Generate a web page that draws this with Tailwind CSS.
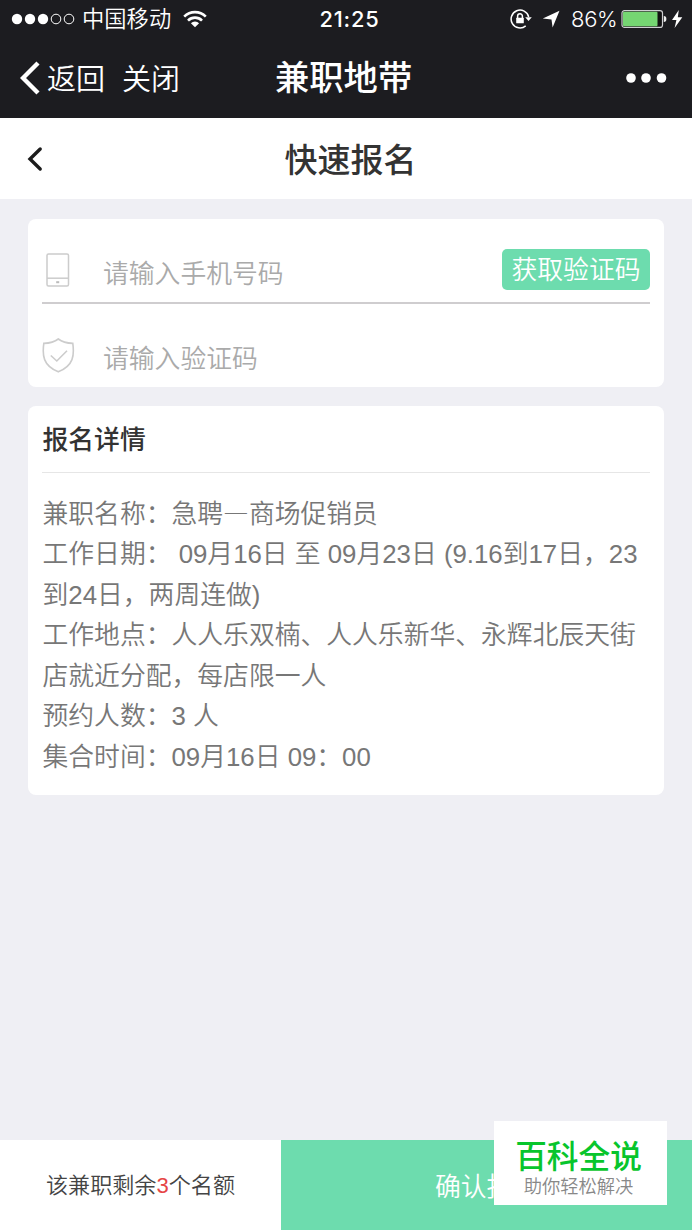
<!DOCTYPE html>
<html lang="zh-CN">
<head>
<meta charset="utf-8">
<title>快速报名</title>
<script src="https://cdn.jsdelivr.net/npm/@tailwindcss/browser@4"></script>
</head>
<body class="relative flex h-[1230px] w-[692px] flex-col overflow-hidden bg-[#efeff4] font-['Liberation_Sans','Noto_Sans_CJK_SC',sans-serif] whitespace-nowrap">
  <header class="h-[118px] bg-[#1c1c20] text-white">
    <!-- status bar -->
    <div class="relative flex h-[38px] items-center pl-[11px] pr-[9px]">
      <svg class="h-[14px] w-[64px]" viewBox="0 0 64 14" fill="#fff"><circle cx="6" cy="7" r="5.2"/><circle cx="19" cy="7" r="5.2"/><circle cx="32" cy="7" r="5.2"/><g fill="none" stroke="#fff" stroke-width="1"><circle cx="45" cy="7" r="4.8"/><circle cx="58" cy="7" r="4.8"/></g></svg>
      <span class="ml-[7px] pt-[2px] text-[22.3px] leading-[38px] font-[350]">中国移动</span>
      <svg class="ml-[12px] h-[18px] w-[24px]" viewBox="0 0 24 18" fill="none" stroke="#fff" stroke-width="2.6"><path d="M1.2 6.6A15.2 15.2 0 0 1 22.8 6.6"/><path d="M5 10.6A9.8 9.8 0 0 1 19 10.6"/><path d="M12 17.2L7.9 13.2A5.8 5.8 0 0 1 16.1 13.2Z" fill="#fff" stroke="none"/></svg>
      <span class="absolute inset-x-0 pl-[7px] text-center font-['Inter'] text-[21.8px] leading-[38px] font-medium tracking-[0.8px]">21:25</span>
      <div class="ml-auto flex items-center">
        <svg class="h-[20px] w-[22px]" viewBox="0 0 22 20" fill="none" stroke="#fff" stroke-width="1.5"><path d="M18.7 8A8.9 8.9 0 1 0 15.7 16.9"/><path d="M15.2 8.2h6.6L18.5 12z" fill="#fff" stroke="none"/><path d="M7.6 9V7.2a2.4 2.4 0 0 1 4.8 0V9"/><rect x="6.2" y="8.7" width="7.6" height="5.6" rx=".5" fill="#fff" stroke="none"/></svg>
        <svg class="ml-[10px] h-[18px] w-[18px]" viewBox="0 0 18 18" fill="#fff"><path d="M17.5 .8L10.6 17.6L9.5 9.6L.8 8.400Z"/></svg>
        <span class="ml-[11px] w-[47px] font-['Inter'] text-[22px] leading-[38px] font-[350] tracking-[-0.3px]">86%</span>
        <svg class="ml-[3px] h-[20px] w-[46px]" viewBox="0 0 46 20"><rect x="1" y="1.6" width="40.5" height="16.8" rx="2.5" fill="#111" stroke="#cfcfd2" stroke-width="1.2"/><rect x="2" y="2.7" width="34.5" height="14.6" rx="1" fill="#75d672"/><path d="M42.8 7q2.6 0 2.6 3t-2.6 3z" fill="#eee"/></svg>
        <svg class="ml-[4px] h-[18px] w-[12px]" viewBox="0 0 12 18" fill="#fff"><path d="M7.8 0L1 10h4.4L3.6 18L11.3 7.2H6.8z"/></svg>
      </div>
    </div>
    <!-- browser bar -->
    <nav class="relative flex h-[80px] items-center pl-[20px] pr-[24px] text-[29px] leading-[80px] font-[350]">
      <svg class="h-[34px] w-[20px]" viewBox="0 0 20 34" fill="none" stroke="#fff" stroke-width="4.4"><path d="M18 2L3 17L18 32"/></svg>
      <span class="ml-[7px] pt-[4px]">返回</span>
      <span class="ml-[17px] pt-[4px]">关闭</span>
      <h1 class="absolute left-[275px] text-[34.3px] leading-[84px] font-medium">兼职地带</h1>
      <svg class="ml-auto h-[10px] w-[42px]" viewBox="0 0 42 10" fill="#fff"><circle cx="5" cy="5" r="4.8"/><circle cx="20" cy="5" r="4.8"/><circle cx="35.5" cy="5" r="4.8"/></svg>
    </nav>
  </header>
  <div class="relative flex h-[81px] items-center bg-white pl-[27px] text-[#333]">
    <svg class="h-[26px] w-[16px]" viewBox="0 0 16 26" fill="none" stroke="#1c1c1c" stroke-width="3.4" stroke-linecap="round"><path d="M13.2 3L3 13L13.2 23"/></svg>
    <h2 class="absolute inset-x-0 pt-[5px] pl-[9px] text-center text-[33px] leading-[82px] font-medium">快速报名</h2>
  </div>

  <main class="flex flex-1 flex-col px-[28px] pt-[20px]">
    <section class="h-[168px] rounded-[8px] bg-white px-[14px] text-[25.8px] font-[350]">
      <div class="flex h-[85px] items-center border-b-2 border-[#cfcdcf]">
        <svg class="mt-[19px] ml-[4px] h-[34px] w-[24px]" viewBox="0 0 24 34" fill="none" stroke="#ccc" stroke-width="1.5"><rect x="1" y="1" width="21.5" height="32" rx="1.5"/><path d="M1 25.2h21.5"/><rect x="10.2" y="28.2" width="3" height="2" fill="#bbb" stroke="none"/></svg>
        <span class="mt-[28px] ml-[33px] text-[#aaa]">请输入手机号码</span>
        <button class="mt-[17px] ml-auto h-[41px] w-[148px] rounded-[5px] bg-[#6ddcae] pt-px text-center leading-[41px] text-white">获取验证码</button>
      </div>
      <div class="flex h-[83px] items-center">
        <svg class="mt-[20px] h-[35px] w-[33px]" viewBox="0 0 33 35" fill="none" stroke="#ccc" stroke-width="1.6"><path d="M16.3 1C12.5 4 7.5 5.2 1.8 5.4C.2 17 .8 27.5 16.3 33.8C31.8 27.5 32.4 17 30.8 5.4C25.1 5.2 20.1 4 16.3 1Z"/><path d="M8.8 17.5L14.8 23L25 12.8"/></svg>
        <span class="mt-[28px] ml-[28px] text-[#aaa]">请输入验证码</span>
      </div>
    </section>
    <section class="mt-[19px] h-[389px] rounded-[8px] bg-white px-[14px] text-[25.8px]">
      <h3 class="h-[67px] border-b border-[#e6e6e6] pt-px pl-[0.5px] leading-[66px] font-medium text-[#333]">报名详情</h3>
      <div class="pt-[18.5px] pl-[0.5px] leading-[40.6px] font-[350] text-[#777]">
        <p>兼职名称：急聘<span class="font-['Noto_Sans_CJK_SC'] font-medium">—</span>商场促销员</p>
        <p>工作日期：&nbsp;09月16日 至 09月23日 (9.16到17日，23<br>到24日，两周连做)</p>
        <p>工作地点：人人乐双楠、人人乐新华、永辉北辰天街<br>店就近分配，每店限一人</p>
        <p>预约人数：3 人</p>
        <p>集合时间：09月16日 09：00</p>
      </div>
    </section>
  </main>

  <footer class="flex h-[90px]">
    <div class="w-[281px] bg-white text-center text-[22.1px] leading-[91px] font-[350] text-[#444]">该兼职剩余<span class="text-[#e64545]">3</span>个名额</div>
    <button class="flex-1 bg-[#6ddcae] pt-[4px] text-[25.8px] font-[350] text-white">确认报名</button>
  </footer>
  <aside class="absolute top-[1121px] left-[494px] h-[84px] w-[173px] bg-white text-center">
    <div class="mt-[15px] pr-[4px] text-[31.7px] leading-[42px] font-medium text-[#08c52c]">百科全说</div>
    <div class="-mt-px pr-[4px] text-[18.3px] leading-[20px] font-[350] text-[#888]">助你轻松解决</div>
  </aside>
</body>
</html>
